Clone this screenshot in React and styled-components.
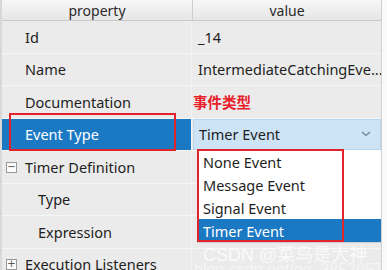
import React from "react";
import styled, { createGlobalStyle } from "styled-components";

const GlobalStyle = createGlobalStyle`
  html, body {
    margin: 0;
    padding: 0;
    background: #fafafa;
  }
  body {
    font-family: "Noto Sans", "Open Sans", sans-serif;
  }
`;

const rows = [
  { name: "Id", value: "_14" },
  { name: "Name", value: "IntermediateCatchingEve..." },
  { name: "Documentation", value: "", note: "事件类型" },
  { name: "Event Type", value: "Timer Event", selected: true },
  { name: "Timer Definition", group: "minus" },
  { name: "Type", child: true },
  { name: "Expression", child: true },
  { name: "Execution Listeners", group: "plus" },
];

const options = ["None Event", "Message Event", "Signal Event", "Timer Event"];

const App = () => {
  return (
    <>
      <GlobalStyle />
      <Panel>
        <Header>
          <HeadCell>property</HeadCell>
          <HeadCell>value</HeadCell>
        </Header>
        {rows.map((r) => (
          <Row key={r.name}>
            <NameCell selected={r.selected}>
              {r.group && <Toggle>{r.group === "minus" ? "−" : "+"}</Toggle>}
              <Label indent={r.child ? 36 : 23}>{r.name}</Label>
            </NameCell>
            <ValueCell>
              {r.note && <Note>{r.note}</Note>}
              {r.selected ? (
                <Combo>
                  <span>{r.value}</span>
                  <svg width="12" height="8" viewBox="0 0 12 8">
                    <path d="M2 2l4 3.5L10 2" fill="none" stroke="#6b7f92" strokeWidth="1.2" />
                  </svg>
                </Combo>
              ) : (
                r.value && <ValueText>{r.value}</ValueText>
              )}
            </ValueCell>
          </Row>
        ))}

        <DropList>
          {options.map((o) => (
            <Option key={o} active={o === "Timer Event"}>
              {o}
            </Option>
          ))}
        </DropList>

        <Mark style={{ left: 7, top: 113, width: 167, height: 38 }} />
        <Mark style={{ left: 195, top: 149, width: 147, height: 93 }} />

        <Watermark>CSDN @菜鸟是大神</Watermark>
        <WatermarkUrl>blog.csdn.net/qq_38526573</WatermarkUrl>
      </Panel>
    </>
  );
};

const Panel = styled.div`
  position: relative;
  width: 382px;
  height: 270px;
  overflow: hidden;
  background: #ebebeb;
  border-left: 2px solid #d8d8d8;
  border-right: 1px solid #d0d0d0;
  box-sizing: border-box;
`;

const Header = styled.div`
  display: grid;
  grid-template-columns: 190px 1fr;
  height: 21px;
  background: linear-gradient(#f7f7f7, #e6e6e6);
  border-bottom: 1px solid #c9c9c9;
  box-sizing: border-box;
`;

const HeadCell = styled.div`
  display: flex;
  align-items: center;
  justify-content: center;
  font-size: 14px;
  color: #2a2a2a;
  & + & {
    border-left: 1px solid #cdcdcd;
  }
`;

const Row = styled.div`
  display: grid;
  grid-template-columns: 190px 1fr;
  height: 32.5px;
  border-bottom: 1px solid #f6f6f6;
  box-sizing: border-box;
`;

const NameCell = styled.div`
  position: relative;
  display: flex;
  align-items: center;
  background: ${(p) => (p.selected ? "#1b79c4" : "#ebebeb")};
  color: ${(p) => (p.selected ? "#ffffff" : "#1e1e1e")};
  border-right: 1px solid #f3f3f3;
`;

const Label = styled.span`
  padding-left: ${(p) => p.indent}px;
  font-size: 14.5px;
`;

const Toggle = styled.span`
  position: absolute;
  left: 4px;
  top: 50%;
  margin-top: -5px;
  width: 9px;
  height: 9px;
  border: 1px solid #9a9a9a;
  background: #fafafa;
  font-size: 10px;
  line-height: 8px;
  text-align: center;
  color: #555;
  font-family: "DejaVu Sans", sans-serif;
`;

const ValueCell = styled.div`
  display: flex;
  align-items: center;
  min-width: 0;
  padding-left: 1px;
`;

const ValueText = styled.span`
  padding-left: 5px;
  font-size: 14.5px;
  color: #1e1e1e;
  white-space: nowrap;
`;

const Note = styled.span`
  font-family: "Noto Sans CJK SC", sans-serif;
  font-weight: 700;
  font-size: 14.5px;
  color: #e8202a;
`;

const Combo = styled.div`
  flex: 1;
  display: flex;
  align-items: center;
  justify-content: space-between;
  height: 29px;
  padding: 0 8px 0 5px;
  background: #cde4f6;
  border: 1px solid #b7d6f0;
  font-size: 14.5px;
  color: #1e1e1e;
`;

const DropList = styled.div`
  position: absolute;
  left: 195px;
  top: 150px;
  width: 185px;
  background: #ffffff;
  border: 1px solid #cfcfcf;
  border-top: none;
`;

const Option = styled.div`
  height: 23px;
  display: flex;
  align-items: center;
  padding-left: 5px;
  font-size: 14.5px;
  background: ${(p) => (p.active ? "#1b79c4" : "#ffffff")};
  color: ${(p) => (p.active ? "#ffffff" : "#1e1e1e")};
`;

const Mark = styled.div`
  position: absolute;
  border: 2px solid #e3232c;
  box-sizing: border-box;
  pointer-events: none;
`;

const Watermark = styled.div`
  position: absolute;
  left: 201px;
  top: 240px;
  font-family: "Liberation Sans", "Noto Sans CJK SC", sans-serif;
  font-size: 18px;
  color: rgba(255, 255, 255, 0.75);
  white-space: nowrap;
`;

const WatermarkUrl = styled.div`
  position: absolute;
  left: 192px;
  top: 261px;
  font-family: "Liberation Sans", sans-serif;
  font-size: 16px;
  color: rgba(255, 255, 255, 0.5);
  white-space: nowrap;
`;

export default App;
